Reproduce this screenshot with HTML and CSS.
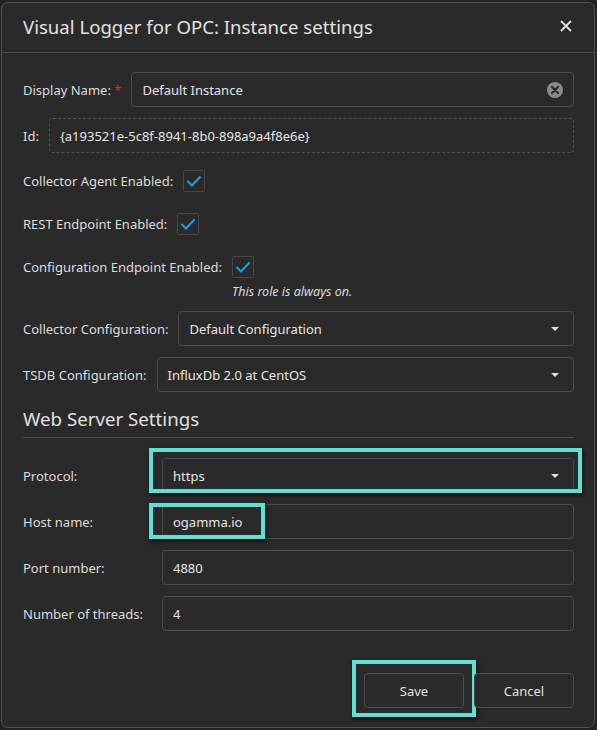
FILE: index.html
```html
<!DOCTYPE html>
<html lang="en">
<head>
  <meta charset="UTF-8" />
  <title>Instance settings</title>
  <link rel="stylesheet" href="styles.css">
</head>
<body>
  <div class="dialog">
    <header class="dialog-header">
      <h1 class="dialog-title">Visual Logger for OPC: Instance settings</h1>
      <svg class="close-btn" width="12" height="12" viewBox="0 0 12 12">
        <path d="M1 1 L11 11 M11 1 L1 11" stroke="#e6e6e6" stroke-width="1.8"/>
      </svg>
    </header>

    <div class="dialog-body">
      <div class="row">
        <label class="label">Display Name: <span class="required">*</span></label>
        <div class="field">
          <span class="value">Default Instance</span>
          <svg class="clear-icon" width="16" height="16" viewBox="0 0 16 16">
            <circle cx="8" cy="8" r="8" fill="#8a8a8a"/>
            <path d="M5 5 L11 11 M11 5 L5 11" stroke="#2a2a2a" stroke-width="2.2" stroke-linecap="round"/>
          </svg>
        </div>
      </div>

      <div class="row">
        <label class="label">Id:</label>
        <div class="field field-readonly">
          <span class="value">{a193521e-5c8f-8941-8b0-898a9a4f8e6e}</span>
        </div>
      </div>

      <div class="check-row check-first">
        <label class="label">Collector Agent Enabled:</label>
        <span class="checkbox"><svg width="16" height="12" viewBox="0 0 16 12"><path d="M1.5 6 L6 10.5 L14.5 1.5" fill="none" stroke="#1e9fe0" stroke-width="2"/></svg></span>
      </div>

      <div class="check-row">
        <label class="label">REST Endpoint Enabled:</label>
        <span class="checkbox"><svg width="16" height="12" viewBox="0 0 16 12"><path d="M1.5 6 L6 10.5 L14.5 1.5" fill="none" stroke="#1e9fe0" stroke-width="2"/></svg></span>
      </div>

      <div class="check-row">
        <label class="label">Configuration Endpoint Enabled:</label>
        <div class="check-col">
          <span class="checkbox"><svg width="16" height="12" viewBox="0 0 16 12"><path d="M1.5 6 L6 10.5 L14.5 1.5" fill="none" stroke="#1e9fe0" stroke-width="2"/></svg></span>
          <span class="hint">This role is always on.</span>
        </div>
      </div>

      <div class="row row-after-hint">
        <label class="label">Collector Configuration:</label>
        <div class="field">
          <span class="value">Default Configuration</span>
          <span class="caret"></span>
        </div>
      </div>

      <div class="row">
        <label class="label">TSDB Configuration:</label>
        <div class="field">
          <span class="value">InfluxDb 2.0 at CentOS</span>
          <span class="caret"></span>
        </div>
      </div>

      <h2 class="section-heading">Web Server Settings</h2>

      <div class="row">
        <label class="label label-fixed">Protocol:</label>
        <div class="field">
          <span class="value">https</span>
          <span class="caret"></span>
          <span class="highlight hl-protocol"></span>
        </div>
      </div>

      <div class="row">
        <label class="label label-fixed">Host name:</label>
        <div class="field">
          <span class="value">ogamma.io</span>
          <span class="highlight hl-host"></span>
        </div>
      </div>

      <div class="row">
        <label class="label label-fixed">Port number:</label>
        <div class="field"><span class="value">4880</span></div>
      </div>

      <div class="row">
        <label class="label label-fixed">Number of threads:</label>
        <div class="field"><span class="value">4</span></div>
      </div>
    </div>

    <footer class="dialog-footer">
      <button class="btn">Save<span class="highlight hl-save"></span></button>
      <button class="btn">Cancel</button>
    </footer>
  </div>
</body>
</html>
```

FILE: styles.css
```css
* { margin: 0; padding: 0; box-sizing: border-box; }

html, body {
  height: 100%;
  background: #232323;
  font-family: "Noto Sans", "Open Sans", sans-serif;
  font-size: 13px;
  color: #dedede;
}

.dialog {
  margin: 2px 2px 0 1px;
  height: 726px;
  background: #2a2a2a;
  border: 1px solid #505050;
  border-radius: 7px;
  display: flex;
  flex-direction: column;
}

.dialog-header {
  height: 50px;
  border-bottom: 1px solid #4a4a4a;
  display: flex;
  align-items: center;
  justify-content: space-between;
  padding: 0 22px 0 21px;
}

.dialog-title {
  font-size: 18.6px;
  font-weight: normal;
  color: #e2e2e2;
  padding-bottom: 2px;
}

.close-btn {
  margin-bottom: 3px;
}

.dialog-body {
  padding: 19px 20px 0 21px;
}

.row {
  display: flex;
  align-items: center;
  gap: 10px;
  margin-bottom: 11px;
}

.label {
  white-space: nowrap;
  color: #dcdcdc;
}

.label-fixed {
  width: 129px;
}

.required {
  color: #d03030;
}

.field {
  position: relative;
  flex: 1;
  height: 35px;
  border: 1px solid #4c4c4c;
  border-radius: 4px;
  display: flex;
  align-items: center;
  justify-content: space-between;
  padding: 0 10px 0 10px;
  color: #e6e6e6;
}

.field-readonly {
  border-style: dashed;
  border-color: #505050;
}

.caret {
  width: 0;
  height: 0;
  border-left: 4px solid transparent;
  border-right: 4px solid transparent;
  border-top: 4px solid #e0e0e0;
  margin-right: 4px;
}

.check-row {
  display: flex;
  align-items: flex-start;
  gap: 10px;
  margin-top: 21px;
  height: 22px;
}

.check-row .label {
  line-height: 22px;
}

.check-first {
  margin-top: 17px;
}

.check-col {
  display: flex;
  flex-direction: column;
}

.checkbox {
  width: 22px;
  height: 22px;
  border: 1px solid #464646;
  border-radius: 2px;
  display: flex;
  align-items: center;
  justify-content: center;
}

.hint {
  font-style: italic;
  font-size: 12.5px;
  white-space: nowrap;
  margin-top: 5px;
  color: #dadada;
}

.row-after-hint {
  margin-top: 33px;
}

.section-heading {
  font-size: 18.7px;
  font-weight: normal;
  color: #e0e0e0;
  padding: 3px 0 6px;
  border-bottom: 1px solid #4a4a4a;
  margin-bottom: 20px;
}

.highlight {
  position: absolute;
  border: 4px solid #5ee0d4;
  box-shadow: 1px 2px 4px rgba(0, 0, 0, 0.8);
  pointer-events: none;
}

.hl-protocol {
  left: -14px;
  right: -9px;
  top: -11px;
  bottom: -1px;
}

.hl-host {
  left: -14px;
  width: 116px;
  top: -2px;
  bottom: -1px;
}

.dialog-footer {
  margin-top: auto;
  display: flex;
  justify-content: flex-end;
  gap: 10px;
  padding: 0 20px 19px 0;
}

.btn {
  position: relative;
  width: 100px;
  height: 35px;
  background: #2a2a2a;
  border: 1px solid #4c4c4c;
  border-radius: 4px;
  color: #e0e0e0;
  font-family: inherit;
  font-size: 13px;
}

.hl-save {
  left: -13px;
  right: -13px;
  top: -14px;
  bottom: -10px;
}
```
